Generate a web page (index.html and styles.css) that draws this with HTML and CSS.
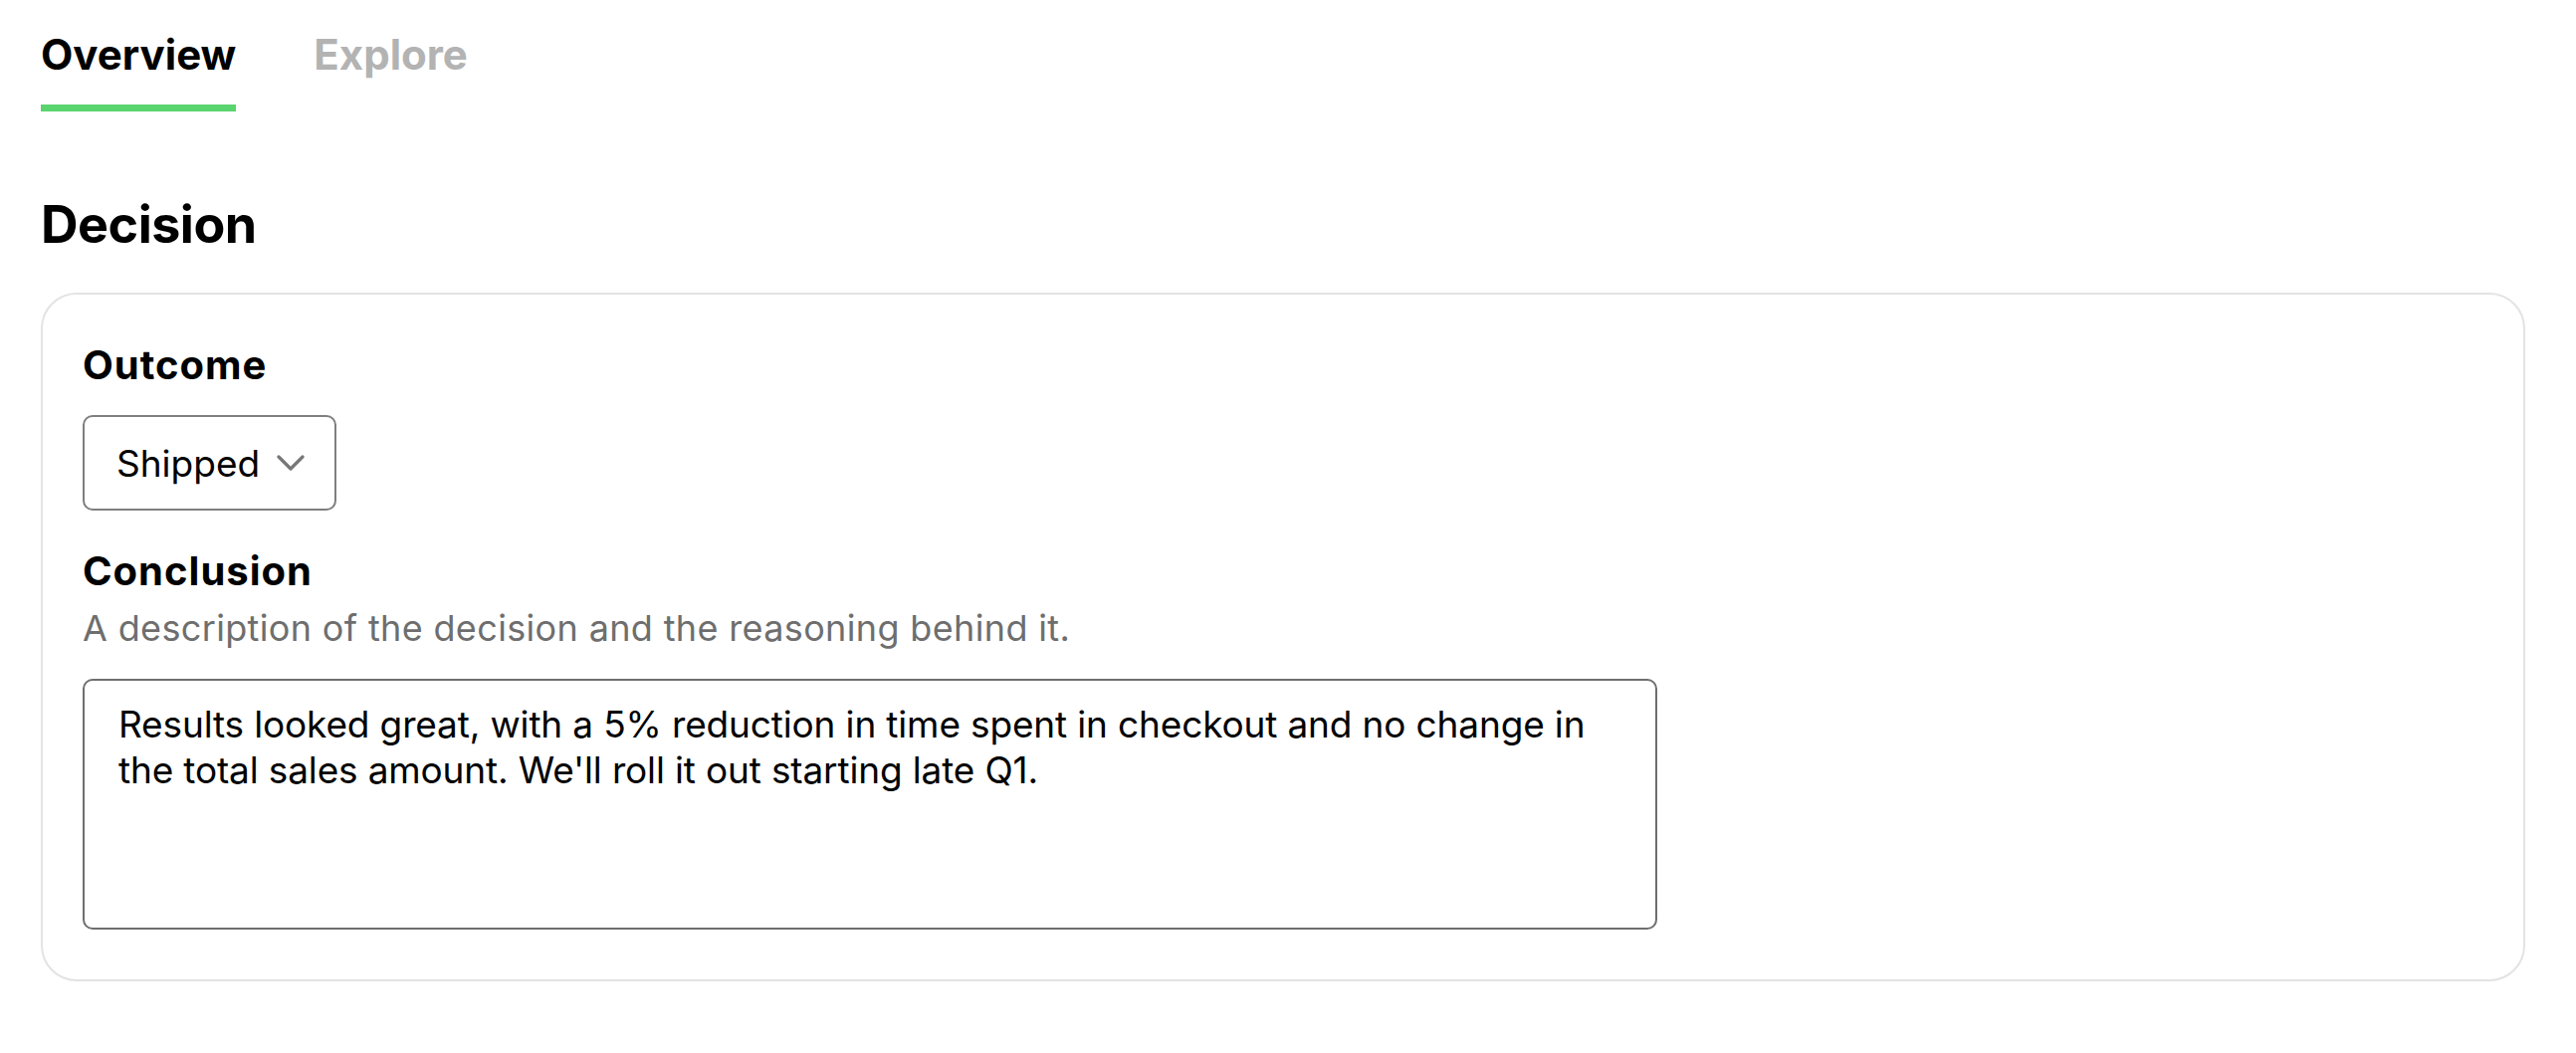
FILE: index.html
```html
<!DOCTYPE html>
<html lang="en">
<head>
<meta charset="utf-8">
<title>Decision</title>
<link rel="stylesheet" href="styles.css">
</head>
<body>
<nav class="tabs">
  <a class="tab tab-active">Overview</a>
  <a class="tab">Explore</a>
</nav>
<h1 class="section-title">Decision</h1>
<section class="card">
  <div class="field-label">Outcome</div>
  <button class="select" type="button">
    <span class="select-value">Shipped</span>
    <svg class="chevron" width="28" height="17" viewBox="0 0 28 17" aria-hidden="true"><polyline points="2,2 14,14 26,2" fill="none" stroke="#777" stroke-width="3.2" stroke-linecap="round" stroke-linejoin="round"/></svg>
  </button>
  <div class="field-label field-label-spaced">Conclusion</div>
  <div class="field-help">A description of the decision and the reasoning behind it.</div>
  <textarea class="textarea">Results looked great, with a 5% reduction in time spent in checkout and no change in the total sales amount. We'll roll it out starting late Q1.</textarea>
</section>
</body>
</html>
```
FILE: styles.css
```css
* { box-sizing: border-box; }
html, body { background: #fff; }
body {
  margin: 0;
  padding: 0 51px 0 41px;
  font-family: "Inter", "Liberation Sans", sans-serif;
  color: #000;
}
.tabs {
  display: flex;
  gap: 78px;
  padding-top: 29px;
}
.tab {
  font-size: 42px;
  line-height: 52px;
  font-weight: 700;
  color: #b3b3b3;
  padding-bottom: 24px;
  border-bottom: 7px solid transparent;
}
.tab-active {
  color: #000;
  border-bottom-color: #5ad46e;
}
.section-title {
  margin: 82px 0 0;
  font-size: 52px;
  line-height: 64px;
  font-weight: 700;
  letter-spacing: -0.5px;
}
.card {
  margin-top: 36px;
  border: 2px solid #e3e3e3;
  border-radius: 36px;
  padding: 47px 40px 50px;
  display: flex;
  flex-direction: column;
  align-items: flex-start;
}
.field-label {
  font-size: 40px;
  line-height: 48px;
  font-weight: 700;
  letter-spacing: 1px;
}
.field-label-spaced { margin-top: 37px; }
.select {
  margin-top: 26px;
  width: 255px;
  height: 96px;
  border: 2px solid #7f7f7f;
  border-radius: 10px;
  background: #fff;
  padding: 0 30px 0 32px;
  display: flex;
  align-items: center;
  justify-content: space-between;
  font-family: inherit;
  font-size: 37px;
  color: #000;
}
.chevron { flex: none; }
.field-help {
  margin-top: 11px;
  font-size: 36px;
  line-height: 44px;
  letter-spacing: 0.35px;
  color: #6e6e6e;
}
.textarea {
  margin-top: 29px;
  width: 1582px;
  height: 252px;
  border: 2px solid #6f6f6f;
  border-radius: 10px;
  padding: 21px 34px;
  font-family: inherit;
  font-size: 37px;
  line-height: 46px;
  letter-spacing: -0.15px;
  color: #000;
  resize: none;
  overflow: hidden;
}
```
